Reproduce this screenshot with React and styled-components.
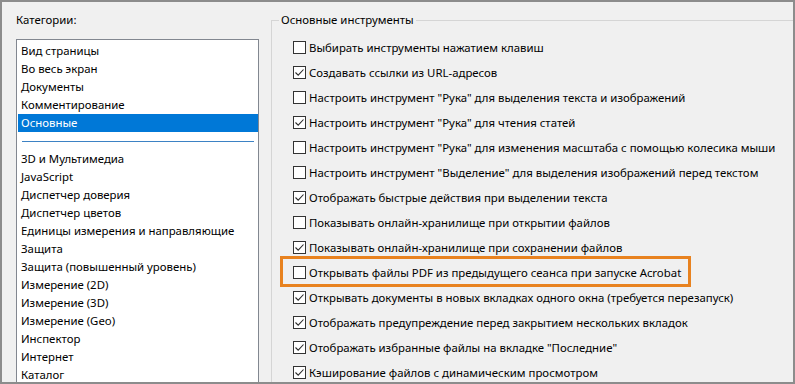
import styled, { createGlobalStyle } from "styled-components";

const GlobalStyle = createGlobalStyle`
  html, body {
    margin: 0;
    padding: 0;
    background: #f0f0f0;
  }
  * {
    box-sizing: border-box;
  }
`;

const categories = [
  "Вид страницы",
  "Во весь экран",
  "Документы",
  "Комментирование",
  "Основные",
  null,
  "3D и Мультимедиа",
  "JavaScript",
  "Диспетчер доверия",
  "Диспетчер цветов",
  "Единицы измерения и направляющие",
  "Защита",
  "Защита (повышенный уровень)",
  "Измерение (2D)",
  "Измерение (3D)",
  "Измерение (Geo)",
  "Инспектор",
  "Интернет",
  "Каталог",
];

const options = [
  { text: "Выбирать инструменты нажатием клавиш", checked: false },
  { text: "Создавать ссылки из URL-адресов", checked: true },
  { text: 'Настроить инструмент "Рука" для выделения текста и изображений', checked: false },
  { text: 'Настроить инструмент "Рука" для чтения статей', checked: true },
  { text: 'Настроить инструмент "Рука" для изменения масштаба с помощью колесика мыши', checked: false },
  { text: 'Настроить инструмент "Выделение" для выделения изображений перед текстом', checked: false },
  { text: "Отображать быстрые действия при выделении текста", checked: true },
  { text: "Показывать онлайн-хранилище при открытии файлов", checked: false },
  { text: "Показывать онлайн-хранилище при сохранении файлов", checked: true },
  { text: "Открывать файлы PDF из предыдущего сеанса при запуске Acrobat", checked: false, highlight: true },
  { text: "Открывать документы в новых вкладках одного окна (требуется перезапуск)", checked: true },
  { text: "Отображать предупреждение перед закрытием нескольких вкладок", checked: true },
  { text: 'Отображать избранные файлы на вкладке "Последние"', checked: true },
  { text: "Кэширование файлов с динамическим просмотром", checked: true },
];

export default function App() {
  return (
    <>
      <GlobalStyle />
      <Frame>
        <LeftPane>
          <Caption>Категории:</Caption>
          <List>
            {categories.map((c, i) =>
              c === null ? (
                <Separator key={i} />
              ) : (
                <Item key={i} selected={c === "Основные"}>
                  {c}
                </Item>
              )
            )}
          </List>
        </LeftPane>
        <Group>
          <Legend>Основные инструменты</Legend>
          {options.map((o, i) => (
            <Row key={i} highlight={o.highlight}>
              <Box>
                {o.checked && (
                  <svg width="11" height="11" viewBox="0 0 11 11">
                    <polyline
                      points="1.5,5.5 4.2,8.2 9.5,2.5"
                      fill="none"
                      stroke="#2b2b2b"
                      strokeWidth="1.1"
                    />
                  </svg>
                )}
              </Box>
              <Label>{o.text}</Label>
            </Row>
          ))}
        </Group>
      </Frame>
    </>
  );
}

const Frame = styled.div`
  width: 795px;
  height: 384px;
  border: 2px solid #8c8c8c;
  background: #f0f0f0;
  display: flex;
  overflow: hidden;
  font-family: "Noto Sans", "Open Sans", sans-serif;
  font-size: 11.4px;
  color: #000;
`;

const LeftPane = styled.div`
  width: 243px;
  margin-left: 14px;
  padding-top: 9px;
  display: flex;
  flex-direction: column;
  flex-shrink: 0;
`;

const Caption = styled.div`
  line-height: 18px;
  height: 18px;
  margin-bottom: 10px;
`;

const List = styled.div`
  flex: 1;
  background: #fff;
  border: 1px solid #828790;
  border-bottom: none;
  padding: 2px 0 0 1px;
`;

const Item = styled.div`
  height: 18px;
  line-height: 18px;
  padding-left: 3px;
  white-space: nowrap;
  background: ${(props) => (props.selected ? "#0078d7" : "transparent")};
  color: ${(props) => (props.selected ? "#fff" : "#000")};
`;

const Separator = styled.div`
  height: 18px;
  display: flex;
  align-items: center;
  padding: 0 4px 0 4px;
  &::before {
    content: "";
    flex: 1;
    height: 1px;
    background: #3d82c4;
  }
`;

const Group = styled.fieldset`
  flex: 1;
  margin: 9px 0 0 12px;
  padding: 6px 0 0 21px;
  border: 1px solid #d5d5d5;
  border-right: none;
  border-bottom: none;
  min-width: 0;
`;

const Legend = styled.legend`
  margin-left: -14px;
  padding: 0 2px;
  line-height: 18px;
`;

const Row = styled.div`
  position: relative;
  height: 25px;
  display: flex;
  align-items: center;
  width: fit-content;
  white-space: nowrap;
  &::after {
    content: "";
    display: ${(props) => (props.highlight ? "block" : "none")};
    position: absolute;
    top: -4px;
    bottom: -2px;
    left: -13px;
    right: -10px;
    border: 3px solid #e8821f;
  }
`;

const Box = styled.div`
  width: 13px;
  height: 13px;
  border: 1px solid #333;
  background: #fff;
  margin-right: 3px;
  display: flex;
  align-items: center;
  justify-content: center;
  flex-shrink: 0;
`;

const Label = styled.span`
  line-height: 18px;
`;
